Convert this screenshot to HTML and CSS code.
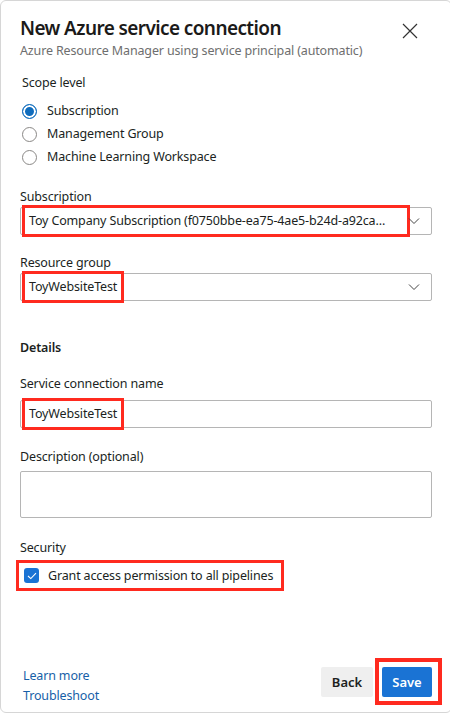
FILE: index.html
```html
<!doctype html>
<html lang="en">
  <head>
    <meta charset="UTF-8" />
    <meta name="viewport" content="width=device-width, initial-scale=1.0" />
    <title>New Azure service connection</title>
    <link rel="stylesheet" href="styles.css">
  </head>
  <body>
    <div class="panel">
      <header class="panel-head">
        <div>
          <h1>New Azure service connection</h1>
          <p class="subtitle">Azure Resource Manager using service principal (automatic)</p>
        </div>
        <button class="close" aria-label="Close">
          <svg width="16" height="16" viewBox="0 0 16 16"><path d="M1 1 L15 15 M15 1 L1 15" stroke="#333" stroke-width="1.2" fill="none"/></svg>
        </button>
      </header>

      <div class="scope">
        <div class="label">Scope level</div>
        <div class="radios">
          <label class="radio"><span class="dot checked"></span>Subscription</label>
          <label class="radio"><span class="dot"></span>Management Group</label>
          <label class="radio"><span class="dot"></span>Machine Learning Workspace</label>
        </div>
      </div>

      <div class="field f-sub">
        <div class="label">Subscription</div>
        <div class="select">
          <span class="value mark mark-wide">Toy Company Subscription (f0750bbe-ea75-4ae5-b24d-a92ca...</span>
          <svg class="chev" width="12" height="8" viewBox="0 0 12 8"><path d="M1 1.5 L6 6.5 L11 1.5" stroke="#444" stroke-width="1" fill="none"/></svg>
        </div>
      </div>

      <div class="field f-rg">
        <div class="label">Resource group</div>
        <div class="select">
          <span class="value mark">ToyWebsiteTest</span>
          <svg class="chev" width="12" height="8" viewBox="0 0 12 8"><path d="M1 1.5 L6 6.5 L11 1.5" stroke="#444" stroke-width="1" fill="none"/></svg>
        </div>
      </div>

      <h2 class="section">Details</h2>

      <div class="field f-name">
        <div class="label">Service connection name</div>
        <div class="input"><span class="value mark">ToyWebsiteTest</span></div>
      </div>

      <div class="field f-desc">
        <div class="label">Description (optional)</div>
        <div class="textarea"></div>
      </div>

      <div class="field f-sec">
        <div class="label">Security</div>
        <label class="check mark">
          <span class="box">
            <svg width="10" height="8" viewBox="0 0 10 8"><path d="M1 4 L3.8 6.6 L9 1.2" stroke="#fff" stroke-width="1.1" fill="none"/></svg>
          </span>
          Grant access permission to all pipelines
        </label>
      </div>

      <footer class="panel-foot">
        <div class="links">
          <a href="#">Learn more</a>
          <a href="#">Troubleshoot</a>
        </div>
        <div class="actions">
          <button class="btn">Back</button>
          <span class="mark mark-btn"><button class="btn primary">Save</button></span>
        </div>
      </footer>
    </div>
  </body>
</html>
```

FILE: styles.css
```css
* {
  box-sizing: border-box;
}

body {
  margin: 0;
  background: #fff;
  font-family: "Noto Sans", "Open Sans", sans-serif;
  color: #201f1e;
  font-size: 12.5px;
  letter-spacing: -0.15px;
}

.panel {
  width: 452px;
  height: 713px;
  border: 1px solid #d6d6d6;
  border-radius: 6px;
  display: flex;
  flex-direction: column;
  padding: 0 19px;
}

.panel-head {
  display: flex;
  justify-content: space-between;
  padding-top: 14px;
}

h1 {
  margin: 0;
  font-size: 19px;
  font-weight: 600;
  line-height: 27px;
  letter-spacing: -0.6px;
  color: #1b1a19;
}

.subtitle {
  margin: 0;
  color: #6e6e6e;
  line-height: 18px;
}

.close {
  border: 0;
  background: none;
  padding: 0;
  margin: 8px 14px 0 0;
  width: 16px;
  height: 16px;
}

.label {
  line-height: 18px;
  color: #201f1e;
}

.scope {
  margin-top: 14px;
  padding-left: 2px;
}

.radios {
  display: flex;
  flex-direction: column;
  gap: 5px;
  margin-top: 10px;
}

.radio {
  display: flex;
  align-items: center;
  gap: 10px;
  line-height: 18px;
}

.dot {
  width: 15px;
  height: 15px;
  border-radius: 50%;
  border: 1px solid #8a8886;
  display: inline-block;
}

.dot.checked {
  border-color: #0f6cbd;
  box-shadow: inset 0 0 0 2px #fff;
  background: #0f6cbd;
}

.field {
  margin-top: 22px;
}

.field .label {
  margin-bottom: 1px;
}

.select,
.input {
  width: 412px;
  height: 28px;
  border: 1px solid #b5b5b5;
  border-radius: 2px;
  display: flex;
  align-items: center;
  justify-content: space-between;
  padding: 0 11px 0 4px;
}

.textarea {
  width: 412px;
  height: 47px;
  border: 1px solid #b5b5b5;
  border-radius: 2px;
}

.mark {
  outline: 3px solid #ff2a1f;
}

.value {
  line-height: 26px;
  padding: 0 4px;
  white-space: nowrap;
}

.mark-wide {
  width: 382px;
  overflow: hidden;
}

.f-rg {
  margin-top: 19px;
}

.section {
  margin: 38px 0 0;
  font-size: 12.5px;
  font-weight: 600;
  line-height: 18px;
}

.f-name {
  margin-top: 18px;
}

.f-name .label {
  margin-bottom: 7px;
}

.f-desc {
  margin-top: 20px;
}

.f-desc .label {
  margin-bottom: 5px;
}

.f-sec {
  margin-top: 21px;
}

.check {
  display: inline-flex;
  align-items: center;
  gap: 9px;
  margin-top: 5px;
  margin-left: -1px;
  padding: 4px 8px 4px 5px;
}

.box {
  width: 15px;
  height: 15px;
  border-radius: 3px;
  background: #1a73d4;
  display: flex;
  align-items: center;
  justify-content: center;
}

.panel-foot {
  margin-top: auto;
  display: flex;
  justify-content: space-between;
  align-items: flex-end;
  padding-bottom: 6px;
}

.links {
  display: flex;
  flex-direction: column;
  padding-left: 3px;
  line-height: 20px;
}

.links a {
  color: #175fa8;
  text-decoration: none;
}

.actions {
  display: flex;
  align-items: center;
  gap: 9px;
  margin-bottom: 5px;
}

.btn {
  font-family: inherit;
  font-size: 13px;
  font-weight: 600;
  height: 30px;
  width: 52px;
  padding: 0;
  border: 0;
  border-radius: 2px;
  background: #efefef;
  color: #201f1e;
}

.btn.primary {
  background: #1a73d4;
  color: #fff;
  width: 50px;
}

.mark-btn {
  display: inline-flex;
  outline-width: 4px;
  padding: 5px 6px 4px 3px;
  margin-left: -3px;
  margin-right: -6px;
}
```
